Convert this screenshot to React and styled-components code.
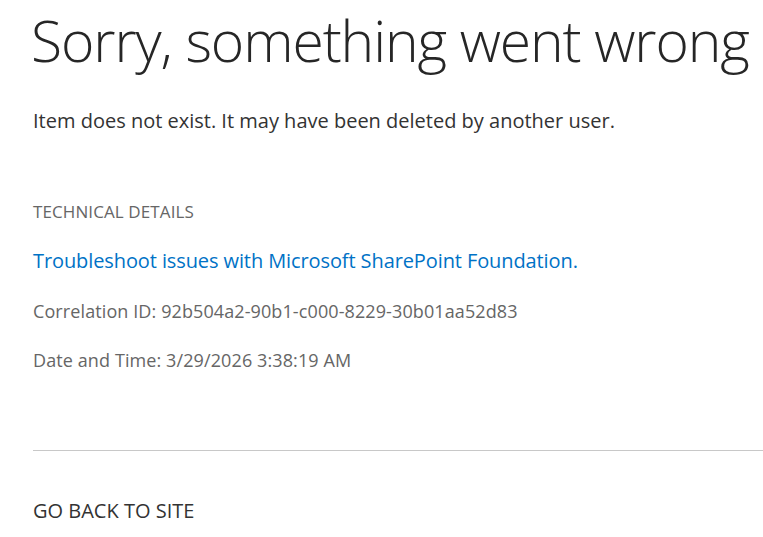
import React from "react";
import styled, { createGlobalStyle } from "styled-components";

const Global = createGlobalStyle`
  html, body { margin: 0; padding: 0; background: #fff; }
  body { font-family: "Open Sans", "Noto Sans", sans-serif; overflow: hidden; }
`;

const Page = styled.main`
  padding: 0 0 0 33px;
  display: flex;
  flex-direction: column;
`;

const Title = styled.h1`
  margin: 5px 0 0 -2px;
  font-size: 57px;
  font-weight: 300;
  line-height: 70px;
  color: #262626;
  white-space: nowrap;
  letter-spacing: -1.1px;
`;

const Message = styled.p`
  margin: 32px 0 0;
  font-size: 20px;
  line-height: 28px;
  color: #333;
  white-space: nowrap;
`;

const Details = styled.section`
  margin-top: 65px;
  display: flex;
  flex-direction: column;
`;

const Label = styled.div`
  font-size: 17px;
  line-height: 24px;
  color: #666;
  text-transform: uppercase;
  letter-spacing: 0.1px;
`;

const Link = styled.a`
  margin-top: 23px;
  font-size: 20px;
  line-height: 28px;
  color: #0072c6;
  text-decoration: none;
  letter-spacing: -0.1px;
  white-space: nowrap;
`;

const Info = styled.div`
  margin-top: 23px;
  font-size: 18px;
  line-height: 26px;
  color: #666;
  letter-spacing: 0.1px;
  white-space: nowrap;
`;

const Divider = styled.hr`
  margin: 77px 0 0;
  border: none;
  border-top: 1px solid #c8c8c8;
  width: 100%;
`;

const Back = styled.a`
  margin-top: 46px;
  font-size: 20px;
  line-height: 28px;
  color: #333;
  text-decoration: none;
`;

export default function App() {
  return (
    <>
      <Global />
      <Page>
        <Title>Sorry, something went wrong</Title>
        <Message>Item does not exist. It may have been deleted by another user.</Message>
        <Details>
          <Label>Technical Details</Label>
          <Link href="#">Troubleshoot issues with Microsoft SharePoint Foundation.</Link>
          <Info>Correlation ID: 92b504a2-90b1-c000-8229-30b01aa52d83</Info>
          <Info>Date and Time: 3/29/2026 3:38:19 AM</Info>
        </Details>
        <Divider />
        <Back href="#">GO BACK TO SITE</Back>
      </Page>
    </>
  );
}
